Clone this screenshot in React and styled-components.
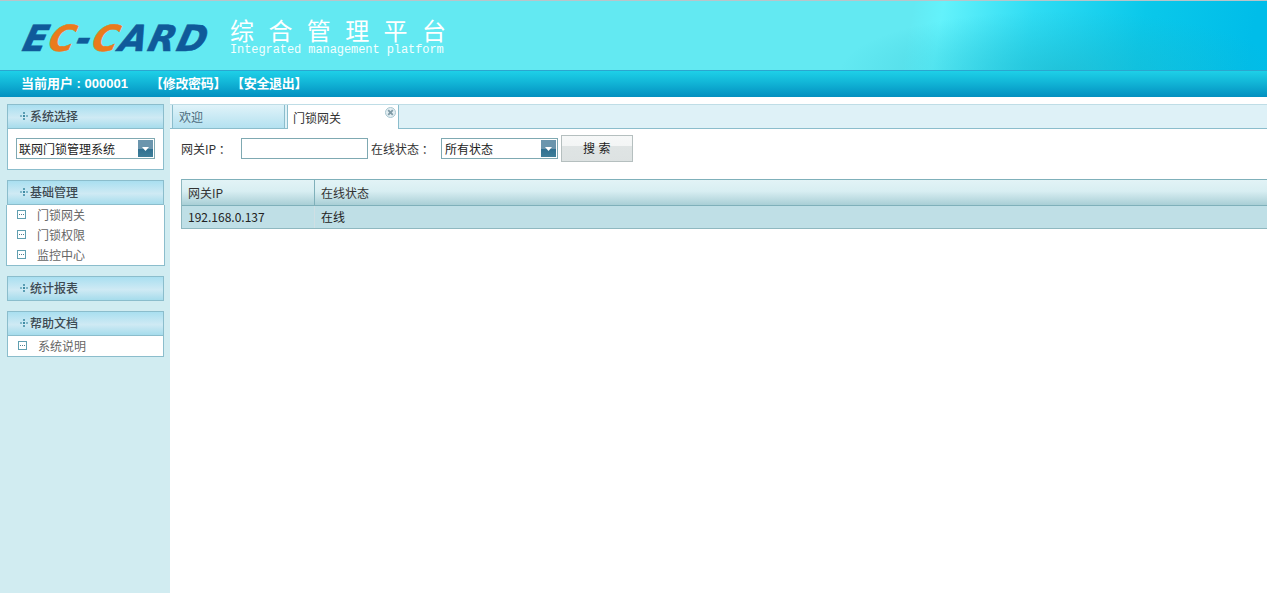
import React from "react";
import styled, { createGlobalStyle } from "styled-components";

const GlobalStyle = createGlobalStyle`
  html, body {
    margin: 0;
    padding: 0;
    height: 100%;
    overflow: hidden;
    background: #fff;
  }
  #root {
    height: 100%;
  }
  * {
    box-sizing: border-box;
  }
`;

const CJK = `"Noto Sans CJK SC", "Liberation Sans", sans-serif`;

const menus = [
  { title: "基础管理", items: ["门锁网关", "门锁权限", "监控中心"] },
  { title: "统计报表", items: [] },
  { title: "帮助文档", items: ["系统说明"], flush: true },
];

const DotsIcon = () => (
  <DotsSvg width="8" height="8" viewBox="0 0 8 8">
    <rect x="3" y="0" width="2" height="2" fill="#5b9fb5" />
    <rect x="0" y="3" width="2" height="2" fill="#7db6c8" />
    <rect x="3" y="3" width="2" height="2" fill="#3f8aa3" />
    <rect x="6" y="3" width="2" height="2" fill="#7db6c8" />
    <rect x="3" y="6" width="2" height="2" fill="#5b9fb5" />
  </DotsSvg>
);

const NodeIcon = () => (
  <NodeSvg width="9" height="9" viewBox="0 0 9 9">
    <rect x="0.5" y="0.5" width="8" height="8" fill="#fff" stroke="#5f9fb0" />
    <rect x="2" y="4" width="1" height="1" fill="#4f7f90" />
    <rect x="4" y="4" width="1" height="1" fill="#4f7f90" />
    <rect x="6" y="4" width="1" height="1" fill="#4f7f90" />
  </NodeSvg>
);

const Arrow = () => (
  <ArrowBox>
    <svg width="7" height="4" viewBox="0 0 7 4">
      <path d="M0 0H7L3.5 4Z" fill="#fff" />
    </svg>
  </ArrowBox>
);

const CloseIcon = () => (
  <CloseSvg width="11" height="11" viewBox="0 0 11 11">
    <circle cx="5.5" cy="5.5" r="5" fill="#e3eef2" stroke="#a8c6d0" />
    <path d="M3.2 3.2L7.8 7.8M7.8 3.2L3.2 7.8" stroke="#7f9aa6" strokeWidth="1.8" />
  </CloseSvg>
);

export default function App() {
  return (
    <Page>
      <GlobalStyle />
      <Banner>
        <Logo>
          <b>E</b>
          <em>C</em>
          <b>-</b>
          <em>C</em>
          <b>ARD</b>
        </Logo>
        <TitleBlock>
          <Title>综合管理平台</Title>
          <Subtitle>Integrated management platform</Subtitle>
        </TitleBlock>
      </Banner>
      <UserBar>
        <UserName>当前用户 : 000001</UserName>
        <UserLink>【修改密码】</UserLink>
        <UserLink>【安全退出】</UserLink>
      </UserBar>
      <Body>
        <Sidebar>
          <Panel>
            <PanelHead>
              <DotsIcon />
              系统选择
            </PanelHead>
            <SelectBody>
              <FakeSelect $width="139px">
                <SelectText>联网门锁管理系统</SelectText>
                <Arrow />
              </FakeSelect>
            </SelectBody>
          </Panel>
          {menus.map((menu) => (
            <Panel key={menu.title}>
              <PanelHead>
                <DotsIcon />
                {menu.title}
              </PanelHead>
              {menu.items.length > 0 && (
                <MenuList $flush={menu.flush}>
                  {menu.items.map((item) => (
                    <MenuItem key={item}>
                      <NodeIcon />
                      {item}
                    </MenuItem>
                  ))}
                </MenuList>
              )}
            </Panel>
          ))}
        </Sidebar>
        <Main>
          <TabStrip>
            <Tab>欢迎</Tab>
            <Tab $active>
              门锁网关
              <CloseIcon />
            </Tab>
          </TabStrip>
          <SearchRow>
            <FieldLabel $width="60px">网关IP ：</FieldLabel>
            <TextInput />
            <FieldLabel $width="70px">在线状态 ：</FieldLabel>
            <SearchSelect>
              <FakeSelect $width="117px">
                <SelectText $pad="3px">所有状态</SelectText>
                <Arrow />
              </FakeSelect>
            </SearchSelect>
            <SearchButton>搜 索</SearchButton>
          </SearchRow>
          <Grid>
            <HeadRow>
              <HeadCell $width="133px">网关IP</HeadCell>
              <HeadCell>在线状态</HeadCell>
            </HeadRow>
            <DataRow>
              <DataCell $width="133px">192.168.0.137</DataCell>
              <DataCell>在线</DataCell>
            </DataRow>
          </Grid>
        </Main>
      </Body>
    </Page>
  );
}

const Page = styled.div`
  height: 593px;
  width: 1267px;
  display: flex;
  flex-direction: column;
  font-family: ${CJK};
  font-size: 12px;
  color: #333;
  overflow: hidden;
`;

const Banner = styled.header`
  height: 71px;
  flex: none;
  display: flex;
  align-items: flex-start;
  padding: 18px 0 0 24px;
  border-top: 1px solid #b9c4c9;
  border-bottom: 1px solid #2ba6cf;
  background:
    radial-gradient(ellipse 220px 60px at 1060px 70px, rgba(30, 180, 200, 0.55), rgba(30, 180, 200, 0) 100%),
    linear-gradient(100deg, rgba(99, 233, 242, 0) 0, rgba(99, 233, 242, 0) 900px, #63f2fb 930px, #2fdcf3 1020px, #0ac8ea 1130px, #00bde9 1240px),
    #63e9f2;
`;

const Logo = styled.div`
  width: 186px;
  font-family: "DejaVu Sans", sans-serif;
  font-size: 36px;
  line-height: 40px;
  font-weight: 700;
  font-style: italic;
  letter-spacing: 1.5px;
  white-space: nowrap;
  color: #0f5a9a;
  -webkit-text-stroke: 0.6px currentColor;
  transform: scaleX(0.98) skewX(-14deg);
  transform-origin: left center;

  b, em {
    font-style: italic;
    font-weight: 700;
  }
  em {
    color: #ea7b1c;
  }
`;

const TitleBlock = styled.div`
  margin: -1px 0 0 20px;
`;

const Title = styled.div`
  font-family: "Noto Sans CJK SC", serif;
  font-size: 24px;
  font-weight: 400;
  line-height: 24px;
  letter-spacing: 14.4px;
  color: #fff;
  white-space: nowrap;
`;

const Subtitle = styled.div`
  font-family: "Liberation Mono", monospace;
  margin-top: 2px;
  font-size: 12px;
  line-height: 12px;
  letter-spacing: -0.08px;
  color: #f2ffff;
  white-space: nowrap;
`;

const UserBar = styled.nav`
  height: 26px;
  flex: none;
  display: flex;
  align-items: center;
  padding: 0 0 3px 21px;
  color: #fff;
  font-size: 13px;
  font-weight: 700;
  letter-spacing: -0.3px;
  background: linear-gradient(#1ed0e8 0, #13b8d8 40%, #0390c0 100%);
`;

const UserName = styled.span`
  width: 129px;
  font-family: "Liberation Sans", ${CJK};
  letter-spacing: 0;
  white-space: nowrap;
`;

const UserLink = styled.span`
  width: 81px;
  white-space: nowrap;
`;

const Body = styled.div`
  flex: 1;
  display: flex;
  min-height: 0;
`;

const Sidebar = styled.aside`
  width: 170px;
  flex: none;
  display: flex;
  flex-direction: column;
  gap: 10px;
  padding: 7px 6px 0 7px;
  background: #d1ecf1;
`;

const Panel = styled.section`
  width: 157px;
`;

const PanelHead = styled.h3`
  height: 25px;
  margin: 0;
  display: flex;
  align-items: center;
  padding: 0 0 2px 12px;
  font-size: 12px;
  font-weight: 500;
  color: #3c4a52;
  border: 1px solid #8bbdcc;
  background: linear-gradient(#a9dff0 0, #cfeaf4 55%, #a6dcec 100%);
`;

const DotsSvg = styled.svg`
  margin-right: 2px;
`;

const SelectBody = styled.div`
  height: 41px;
  padding-top: 9px;
  padding-left: 8px;
  background: #fff;
  border: 1px solid #8bbdcc;
  border-top: 0;
`;

const FakeSelect = styled.div`
  width: ${(p) => p.$width};
  height: 21px;
  flex: none;
  display: flex;
  align-items: center;
  justify-content: space-between;
  padding-right: 1px;
  background: #fff;
  border: 1px solid #7fa9b2;
`;

const SearchSelect = styled.div`
  margin-top: 3px;
`;

const SelectText = styled.span`
  padding: 0 0 0 ${(p) => p.$pad || "2px"};
  color: #222;
  white-space: nowrap;
`;

const ArrowBox = styled.span`
  width: 15px;
  height: 17px;
  display: flex;
  align-items: center;
  justify-content: center;
  background: linear-gradient(#6b95ad 0, #6b95ad 50%, #2f6f90 50%, #3f7f9a 100%);
`;

const MenuList = styled.ul`
  margin: 0 ${(p) => (p.$flush ? "0" : "-1px")};
  padding: 0;
  list-style: none;
  background: #fff;
  border: 1px solid #8bbdcc;
  border-top: 0;
`;

const MenuItem = styled.li`
  height: 20px;
  display: flex;
  align-items: center;
  padding: 0 0 2px 10px;
  color: #666;
`;

const NodeSvg = styled.svg`
  margin-right: 11px;
`;

const Main = styled.main`
  flex: 1;
  min-width: 0;
  padding-top: 7px;
  background: #fff;
`;

const TabStrip = styled.div`
  height: 25px;
  display: flex;
  gap: 2px;
  padding-left: 2px;
  background: #def1f7;
  border-top: 1px solid #bfdde6;
  border-bottom: 1px solid #8bbdcc;
`;

const Tab = styled.div`
  position: relative;
  width: ${(p) => (p.$active ? "112px" : "113px")};
  height: ${(p) => (p.$active ? "24px" : "23px")};
  display: flex;
  align-items: center;
  padding-left: ${(p) => (p.$active ? "5px" : "6px")};
  color: ${(p) => (p.$active ? "#333" : "#4b6b7c")};
  background: ${(p) => (p.$active ? "#fff" : "linear-gradient(#e0f3f9 0, #b4e1f0 100%)")};
  border-left: 1px solid #8bbdcc;
  border-right: 1px solid #8bbdcc;
`;

const CloseSvg = styled.svg`
  position: absolute;
  top: 2px;
  right: 2px;
`;

const SearchRow = styled.div`
  height: 50px;
  display: flex;
  align-items: flex-start;
  padding: 6px 0 0 11px;
`;

const FieldLabel = styled.label`
  width: ${(p) => p.$width};
  flex: none;
  margin-top: 3px;
  line-height: 21px;
  color: #333;
  white-space: nowrap;
`;

const TextInput = styled.input`
  width: 127px;
  height: 21px;
  flex: none;
  margin: 3px 3px 0 0;
  padding: 0 3px;
  background: #fff;
  border: 1px solid #7fa9b2;
  outline: none;
`;

const SearchButton = styled.button`
  width: 72px;
  height: 27px;
  flex: none;
  margin-left: 3px;
  padding: 0 0 2px;
  font-family: ${CJK};
  font-size: 12px;
  letter-spacing: 0.5px;
  color: #222;
  background: linear-gradient(#f6f8f8 0, #f3f5f5 38%, #dfe4e4 42%, #dde2e2 100%);
  border: 1px solid #b5bfbf;
`;

const Grid = styled.div`
  margin-left: 11px;
  border-top: 1px solid #7fb0ba;
  border-left: 1px solid #8fb8c0;
`;

const HeadRow = styled.div`
  height: 26px;
  display: flex;
  background: linear-gradient(#e2f3f6 0, #d8eef2 45%, #a9cfd6 100%);
  border-bottom: 1px solid #7fb0ba;
`;

const DataRow = styled.div`
  height: 23px;
  display: flex;
  background: #bfdfe6;
  border-bottom: 1px solid #8fb8c0;
`;

const HeadCell = styled.div`
  width: ${(p) => p.$width || "auto"};
  flex: ${(p) => (p.$width ? "none" : "1")};
  display: flex;
  align-items: center;
  padding: 0 0 1px 6px;
  color: #333;
  border-right: ${(p) => (p.$width ? "1px solid #7fb0ba" : "0")};
`;

const DataCell = styled.div`
  width: ${(p) => p.$width || "auto"};
  flex: ${(p) => (p.$width ? "none" : "1")};
  display: flex;
  align-items: center;
  padding: 0 0 2px 6px;
  color: #222;
  border-right: ${(p) => (p.$width ? "1px solid #cfdfe4" : "0")};
`;
